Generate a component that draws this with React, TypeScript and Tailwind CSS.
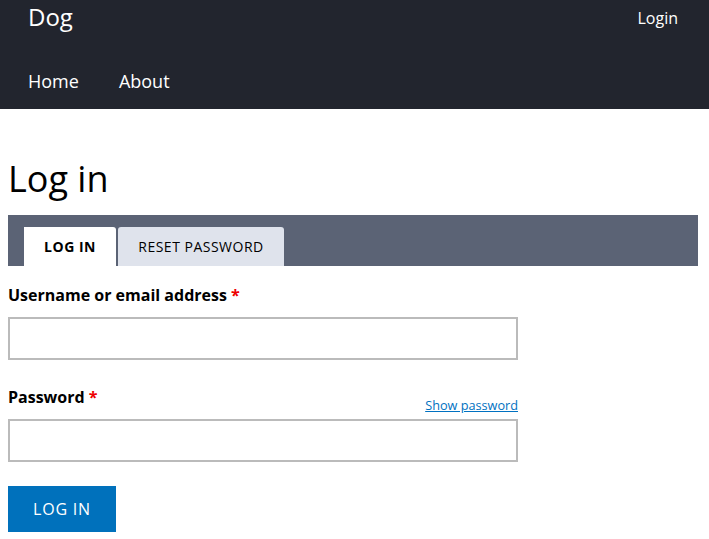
export default function App() {
  return (
    <div className="min-h-[539px] bg-white font-['Open_Sans',sans-serif] text-black">
      <header className="h-[109px] bg-[#22252e] text-white">
        <div className="flex items-start justify-between pl-[28px] pr-[31px]">
          <a className="mt-[1px] text-[24px] leading-[32px]">Dog</a>
          <a className="mt-[7px] text-[16px] leading-[22px]">Login</a>
        </div>
        <nav className="mt-[36px] flex gap-[40px] pl-[28px] text-[18px] leading-[24px]">
          <a>Home</a>
          <a>About</a>
        </nav>
      </header>

      <main className="pl-[8px] pr-[11px]">
        <h1 className="mt-[48px] text-[36px] leading-[44px]">Log in</h1>

        <div className="mt-[14px] flex h-[51px] items-end gap-[2px] bg-[#5b6375] px-[16px]">
          <div className="flex h-[39px] w-[92px] items-center justify-center rounded-tr-[3px] bg-white text-[14px] font-bold uppercase tracking-[0.5px]">
            Log in
          </div>
          <div className="flex h-[39px] w-[166px] items-center justify-center rounded-t-[3px] bg-[#dfe3ec] text-[14px] uppercase tracking-[0.5px]">
            Reset password
          </div>
        </div>

        <form className="w-[510px]">
          <label className="mt-[18px] block text-[16px] font-bold leading-[22px]">
            Username or email address <span className="text-[#e00]">*</span>
          </label>
          <input className="mt-[11px] block h-[43px] w-full border-2 border-[#bbbbbb]" />

          <div className="mt-[26px] flex items-end justify-between">
            <label className="text-[16px] font-bold leading-[22px]">
              Password <span className="text-[#e00]">*</span>
            </label>
            <a className="mb-[-6px] text-[12.7px] leading-[18px] text-[#0071c1] underline">Show password</a>
          </div>
          <input type="password" className="mt-[11px] block h-[43px] w-full border-2 border-[#bbbbbb]" />

          <button className="mt-[24px] flex h-[46px] w-[108px] items-center justify-center bg-[#0071bc] text-[16px] uppercase tracking-[0.8px] text-white">
            Log in
          </button>
        </form>
      </main>
    </div>
  )
}
